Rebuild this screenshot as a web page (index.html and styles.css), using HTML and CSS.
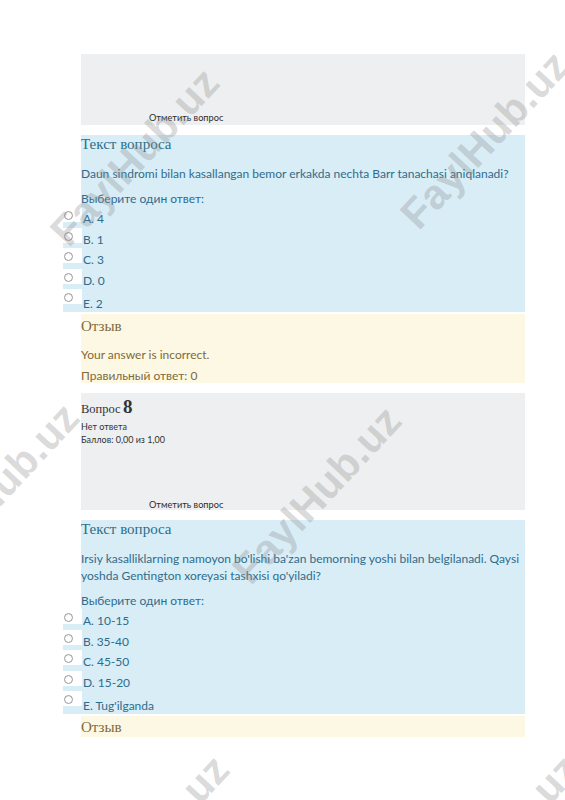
FILE: index.html
```html
<!DOCTYPE html>
<html lang="ru">
<head>
<meta charset="utf-8">
<title>Вопрос</title>
<link rel="stylesheet" href="styles.css">
</head>
<body>
<div class="page">
  <div class="sheet">
    <div class="info info-tail">
      <div class="flag">Отметить вопрос</div>
    </div>

    <div class="formulation">
      <h4 class="fh">Текст вопроса</h4>
      <p class="qtext">Daun sindromi bilan kasallangan bemor erkakda nechta Barr tanachasi aniqlanadi?</p>
      <p class="prompt">Выберите один ответ:</p>
      <div class="answers">
        <div class="opt"><span class="radio"><span class="dot"></span></span><span class="lbl">A. 4</span></div>
        <div class="opt"><span class="radio"><span class="dot"></span></span><span class="lbl">B. 1</span></div>
        <div class="opt"><span class="radio"><span class="dot"></span></span><span class="lbl">C. 3</span></div>
        <div class="opt"><span class="radio"><span class="dot"></span></span><span class="lbl">D. 0</span></div>
        <div class="opt opt-last"><span class="radio"><span class="dot"></span></span><span class="lbl">E. 2</span></div>
      </div>
    </div>

    <div class="outcome outcome-full">
      <h4 class="oh">Отзыв</h4>
      <p class="otext">Your answer is incorrect.</p>
      <p class="otext otext-2">Правильный ответ: 0</p>
    </div>

    <div class="info info-full">
      <div class="qno"><span class="qword">Вопрос</span> <span class="qnum">8</span></div>
      <div class="state">Нет ответа</div>
      <div class="state">Баллов: 0,00 из 1,00</div>
      <div class="flag flag-full">Отметить вопрос</div>
    </div>

    <div class="formulation">
      <h4 class="fh">Текст вопроса</h4>
      <p class="qtext">Irsiy kasalliklarning namoyon bo'lishi ba'zan bemorning yoshi bilan belgilanadi. Qaysi yoshda Gentington xoreyasi tashxisi qo'yiladi?</p>
      <p class="prompt">Выберите один ответ:</p>
      <div class="answers">
        <div class="opt"><span class="radio"><span class="dot"></span></span><span class="lbl">A. 10-15</span></div>
        <div class="opt"><span class="radio"><span class="dot"></span></span><span class="lbl">B. 35-40</span></div>
        <div class="opt"><span class="radio"><span class="dot"></span></span><span class="lbl">C. 45-50</span></div>
        <div class="opt"><span class="radio"><span class="dot"></span></span><span class="lbl">D. 15-20</span></div>
        <div class="opt opt-last"><span class="radio"><span class="dot"></span></span><span class="lbl">E. Tug'ilganda</span></div>
      </div>
    </div>

    <div class="outcome outcome-cut">
      <h4 class="oh">Отзыв</h4>
    </div>
  </div>

  <div class="wm wm-1">FaylHub.uz</div>
  <div class="wm wm-2">FaylHub.uz</div>
  <div class="wm wm-3">FaylHub.uz</div>
  <div class="wm wm-4">FaylHub.uz</div>
  <div class="wm wm-5">FaylHub.uz</div>
  <div class="wm wm-6">FaylHub.uz</div>
</div>
</body>
</html>
```

FILE: styles.css
```css
* { box-sizing: border-box; }

html, body {
  margin: 0;
  padding: 0;
  background: #ffffff;
}

.page {
  position: relative;
  width: 565px;
  height: 800px;
  overflow: hidden;
  font-family: Lato, "Noto Sans", sans-serif;
}

.sheet {
  width: 444px;
  margin-left: 81px;
  padding-top: 54px;
  display: flex;
  flex-direction: column;
}

/* grey info blocks */
.info {
  background: #eeeff0;
  color: #333333;
  display: flex;
  flex-direction: column;
  font-size: 9px;
}

.info-tail {
  height: 71px;
}

.info-full {
  height: 117px;
  margin-top: 10px;
  padding-top: 4px;
}

.flag {
  margin-top: auto;
  padding-left: 68px;
  line-height: 12px;
  padding-bottom: 1px;
  font-size: 9.2px;
  color: #2d2d2d;
}

.flag-full {
  line-height: 10px;
  padding-bottom: 0;
}

.qno {
  font-family: "Liberation Serif", serif;
  line-height: 20px;
  color: #333;
}

.qword { font-size: 12.5px; }
.qnum { font-size: 19px; font-weight: bold; }

.state {
  line-height: 13px;
  font-size: 9px;
}

/* blue question text blocks */
.formulation {
  background: #d9edf7;
  color: #2f6c8c;
  margin-top: 10px;
  padding-top: 0;
}

.fh {
  margin: 0;
  font-family: "Liberation Serif", serif;
  font-weight: normal;
  font-size: 15px;
  line-height: 18px;
  color: #2b6f87;
}

.qtext {
  margin: 12px 0 0;
  font-size: 12px;
  line-height: 17px;
}

.prompt {
  margin: 8px 0 0;
  font-size: 12px;
  line-height: 17px;
}

.answers {
  display: flex;
  flex-direction: column;
}

.opt {
  display: flex;
  height: 20.5px;
  margin-left: -18px;
  background: #d9edf7;
  font-size: 12px;
}

.opt-last { height: 23px; }

.radio {
  width: 19px;
  height: 15px;
  background: #ffffff;
  display: flex;
  align-items: center;
  justify-content: flex-start;
  padding-left: 1px;
  padding-top: 2px;
}

.dot {
  width: 9px;
  height: 9px;
  border-radius: 50%;
  border: 1px solid #9a9a9a;
  background: radial-gradient(circle at 50% 60%, #ffffff 40%, #e6e6e6 100%);
}

.lbl {
  padding-left: 1px;
  padding-top: 5px;
  line-height: 14px;
}

.opt-last .lbl { padding-top: 8px; }

/* yellow feedback blocks */
.outcome {
  background: #fcf8e3;
  color: #7f6a3a;
  margin-top: 2px;
  padding-top: 2px;
}

.outcome-full { height: 69px; }
.outcome-cut { height: 21px; padding-top: 1px; }

.oh {
  margin: 0;
  font-family: "Liberation Serif", serif;
  font-weight: normal;
  font-size: 15px;
  line-height: 20px;
  color: #7f6a3a;
}

.otext {
  margin: 11px 0 0;
  font-size: 12px;
  line-height: 16px;
}

.otext-2 { margin-top: 5px; }

/* watermark overlay */
.wm {
  position: absolute;
  transform: translate(-50%, -50%) rotate(-47deg);
  font-family: "Liberation Sans", Arial, sans-serif;
  font-weight: bold;
  font-size: 42px;
  line-height: 1;
  white-space: nowrap;
  color: rgba(140, 140, 140, 0.33);
  pointer-events: none;
}

.wm-1 { left: 135px; top: 157px; }
.wm-2 { left: 485px; top: 140px; }
.wm-3 { left: -5px; top: 492px; }
.wm-4 { left: 317px; top: 495px; }
.wm-5 { left: 145px; top: 844px; }
.wm-6 { left: 495px; top: 844px; }
```
